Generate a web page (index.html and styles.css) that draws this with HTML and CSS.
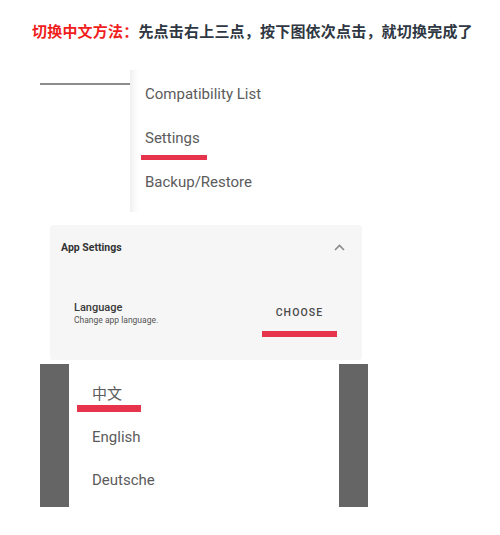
FILE: index.html
```html
<!DOCTYPE html>
<html lang="zh-CN">
<head>
    <meta charset="UTF-8">
    <meta name="viewport" content="width=device-width, initial-scale=1.0">
    <title>切换中文方法</title>
    <link rel="stylesheet" href="styles.css">
</head>
<body>
    <p class="tip"><span class="tip-lead">切换中文方法：</span>先点击右上三点，按下图依次点击，就切换完成了</p>

    <!-- step 1: overflow menu -->
    <div class="menu-shot">
        <div class="menu-behind">
            <div class="menu-rule"></div>
        </div>
        <ul class="menu-panel">
            <li class="menu-item">Compatibility List</li>
            <li class="menu-item marked">
                <span>Settings</span>
                <span class="mark mark-settings"></span>
            </li>
            <li class="menu-item">Backup/Restore</li>
        </ul>
    </div>

    <!-- step 2: app settings card -->
    <div class="card">
        <div class="card-head">
            <span class="card-title">App Settings</span>
            <svg class="chevron" width="11" height="7" viewBox="0 0 11 7">
                <polyline points="1,6 5.5,1.5 10,6" fill="none" stroke="#8a8a8a" stroke-width="1.6"/>
            </svg>
        </div>
        <div class="card-row">
            <div class="setting">
                <div class="setting-name">Language</div>
                <div class="setting-desc">Change app language.</div>
            </div>
            <div class="choose">
                <span class="choose-btn">CHOOSE</span>
                <span class="mark mark-choose"></span>
            </div>
        </div>
    </div>

    <!-- step 3: language dialog -->
    <div class="dialog-shot">
        <div class="shade"></div>
        <ul class="lang-list">
            <li class="lang-item first">
                <span>中文</span>
                <span class="mark mark-lang"></span>
            </li>
            <li class="lang-item">English</li>
            <li class="lang-item">Deutsche</li>
        </ul>
        <div class="shade"></div>
    </div>
</body>
</html>
```

FILE: styles.css
```css
body {
    margin: 0;
    width: 500px;
    background: #fff;
    font-family: Roboto, "Noto Sans", sans-serif;
}
ul {
    list-style: none;
    margin: 0;
    padding: 0;
}
.tip {
    margin: 0;
    padding: 22px 0 0 32px;
    font: bold 15px/18px "Noto Sans CJK SC", sans-serif;
    letter-spacing: 0.2px;
    color: #2f3742;
}
.tip-lead {
    color: #f01d1d;
}
.mark {
    display: block;
    background: #e5344b;
}

/* step 1 */
.menu-shot {
    display: flex;
    margin-top: 30px;
    height: 142px;
}
.menu-behind {
    width: 90px;
    margin-left: 40px;
}
.menu-rule {
    margin-top: 13px;
    height: 2px;
    background: #8c8c8c;
}
.menu-panel {
    width: 185px;
    padding: 2px 0 8px 15px;
    background: linear-gradient(to right, #efefef 0, #fafafa 5px, #fff 10px);
}
.menu-item {
    padding: 11px 0;
    font-size: 15px;
    line-height: 22px;
    color: #5b5b5b;
}
.menu-item.marked {
    padding-bottom: 0;
}
.mark-settings {
    margin: 6px 0 0 -4px;
    width: 66px;
    height: 5px;
}

/* step 2 */
.card {
    width: 312px;
    height: 135px;
    margin: 13px 0 0 50px;
    background: #f6f6f6;
    border-radius: 3px;
}
.card-head {
    display: flex;
    align-items: center;
    justify-content: space-between;
    height: 44px;
    padding: 0 17px 0 11px;
}
.card-title {
    font-size: 10.5px;
    font-weight: bold;
    color: #333;
}
.card-row {
    display: flex;
    justify-content: space-between;
    padding: 32px 25px 0 24px;
}
.setting-name {
    font-size: 11px;
    line-height: 14px;
    font-weight: 500;
    color: #3a3a3a;
}
.setting-desc {
    font-size: 8.5px;
    line-height: 11px;
    color: #555;
}
.choose {
    display: flex;
    flex-direction: column;
    align-items: center;
    width: 75px;
    padding-top: 5px;
}
.choose-btn {
    font-size: 10.5px;
    line-height: 14px;
    font-weight: 500;
    letter-spacing: 1.1px;
    color: #4a4a4a;
}
.mark-choose {
    margin-top: 11px;
    width: 75px;
    height: 6px;
}

/* step 3 */
.dialog-shot {
    display: flex;
    height: 143px;
    margin: 4px 0 0 40px;
    width: 328px;
}
.shade {
    width: 29px;
    background: #656565;
}
.lang-list {
    flex: 1;
    padding-left: 23px;
    background: #fff;
}
.lang-item {
    padding: 14px 0 7px;
    font-size: 15px;
    line-height: 22px;
    color: #5b5b5b;
}
.lang-item.first {
    padding: 18px 0 0;
    font-family: "Noto Sans CJK SC", sans-serif;
}
.mark-lang {
    margin: 1px 0 0 -15px;
    width: 64px;
    height: 7px;
}
```
